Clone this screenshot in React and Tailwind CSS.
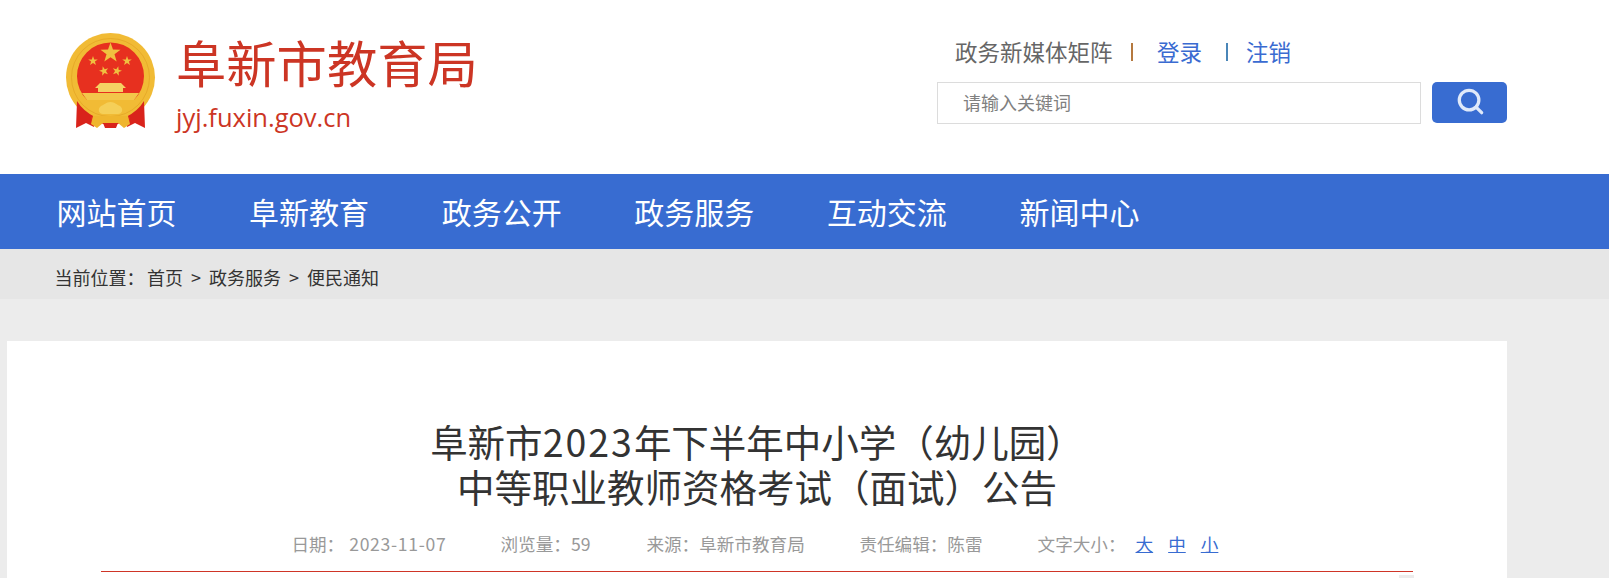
const fontStack = { fontFamily: '"Noto Sans CJK SC", "Noto Sans", sans-serif' };

const navItems = ["网站首页", "阜新教育", "政务公开", "政务服务", "互动交流", "新闻中心"];

function Star({ x, y, r, rotate = 0 }) {
  const pts = [];
  for (let i = 0; i < 10; i++) {
    const rad = i % 2 === 0 ? r : r * 0.4;
    const a = (Math.PI / 5) * i - Math.PI / 2;
    pts.push(`${(rad * Math.cos(a)).toFixed(2)},${(rad * Math.sin(a)).toFixed(2)}`);
  }
  return (
    <polygon
      points={pts.join(" ")}
      fill="#f0c040"
      transform={`translate(${x} ${y}) rotate(${rotate})`}
    />
  );
}

function Emblem() {
  return (
    <svg width="92" height="98" viewBox="0 0 92 98" className="shrink-0">
      {/* gold ring and red field, cut off flat under the gate */}
      <circle cx="45.5" cy="46.500" r="44.500" fill="#f1bb35" />
      <circle cx="45.5" cy="46.500" r="39" fill="none" stroke="#e09f20" strokeWidth="1" opacity="0.6" />
      <path d="M22.100 69 A33.500 33.500 0 1 1 68.900 69 Z" fill="#e7301f" />
      <Star x={45.5} y={22} r={10.500} />
      <Star x={28} y={30} r={5} />
      <Star x={62} y={30} r={5} />
      <Star x={39} y={40} r={5} rotate={-15} />
      <Star x={52} y={40} r={5} rotate={15} />
      {/* gate */}
      <path d="M35 52 L56 52 L61 57 L58 57 L58 61 L33 61 L33 57 L30 57 Z" fill="#f5d263" />
      <path d="M17 62 L74 62 L69 69 L22 69 Z" fill="#f3c64a" />
      {/* drapes */}
      <path d="M12 70 Q18 80 30 86 L29 96 L21 92 L11 97 Z" fill="#d9231b" />
      <path d="M79 70 Q73 80 61 86 L62 96 L70 92 L80 97 Z" fill="#d9231b" />
      <path d="M26 86 L38 93 L53 93 L65 86 L64 91 L27 91 Z" fill="#e7301f" />
      {/* flower and lower ornament */}
      <path d="M45.5 71 C41 71 39 74 36 75 C32 78 34 83 38 83 L53 83 C57 83 59 78 55 75 C52 74 50 71 45.5 71 Z" fill="#f5cf58" />
      <path d="M28 85 L63 85 L65 93 L59 97 L53 92 L38 92 L32 97 L26 93 Z" fill="#efb52e" />
      <path d="M38 92 L53 92 L51 97 L40 97 Z" fill="#d9231b" />
    </svg>
  );
}

export default function App() {
  return (
    <div className="h-[578px] w-full overflow-hidden bg-[#ececec] text-[#333]" style={fontStack}>
      <header className="bg-white">
        <div className="ml-[7px] flex h-[174px] w-[1500px] items-start">
          <div className="ml-[58px] mt-[31px] flex items-start">
            <Emblem />
            <div className="ml-[19px]">
              <div className="-mt-[1px] text-[50.300px] leading-[62px] text-[#cc3524]">阜新市教育局</div>
              <div className="mt-[7px] text-[25.500px] leading-[36px] text-[#cc3524]" style={{ fontFamily: '"Open Sans", sans-serif' }}>
                jyj.fuxin.gov.cn
              </div>
            </div>
          </div>
          <div className="ml-auto mt-[34px] w-[570px]">
            <div className="ml-[18px] flex h-[36px] items-center text-[22.500px]">
              <span className="text-[#666]">政务新媒体矩阵</span>
              <span className="ml-[18px] h-[18px] w-[2px] bg-[#b5793f]" />
              <a className="ml-[24.500px] text-[#3a6bd1]">登录</a>
              <span className="ml-[24px] h-[18px] w-[2px] bg-[#4a86b8]" />
              <a className="ml-[18px] text-[#3a6bd1]">注销</a>
            </div>
            <div className="mt-[12px] flex h-[42px] items-start">
              <div className="flex h-[42px] w-[484px] items-center border border-[#dcdcdc] bg-white pb-[2px] pl-[25px] text-[18px] text-[#808080]">
                请输入关键词
              </div>
              <button className="ml-[11px] flex h-[41px] w-[75px] items-center justify-center rounded-[5px] bg-[#386cd1] pb-[4px]">
                <svg width="28" height="28" viewBox="0 0 30 30" fill="none" stroke="#dfe9fa" strokeWidth="3.500">
                  <circle cx="14" cy="14" r="10.500" />
                  <path d="M21.500 21.500 L27.500 27.500" strokeLinecap="round" />
                </svg>
              </button>
            </div>
          </div>
        </div>
      </header>

      <nav className="h-[75px] bg-[#386cd1]">
        <div className="ml-[56.500px] flex h-full items-center gap-[72.600px] pb-[1px] text-[30px] text-white">
          {navItems.map((item) => (
            <a key={item} className="w-[120px] whitespace-nowrap">
              {item}
            </a>
          ))}
        </div>
      </nav>

      <div className="flex h-[50px] items-center bg-[#e6e6e6] pl-[54.500px] pt-[6px] text-[18px] text-[#333]">
        <span>当前位置：</span>
        <span className="ml-[2.500px]">首页</span>
        <span className="mx-[8px]">&gt;</span>
        <span>政务服务</span>
        <span className="mx-[8px]">&gt;</span>
        <span>便民通知</span>
      </div>

      <main className="ml-[7px] mt-[42px] h-[237px] w-[1500px] bg-white pt-[77px]">
        <h1 className="text-center text-[37.500px] font-normal leading-[45px] text-[#333]">
          阜新市<span className="tracking-[2px]">2023</span>年下半年中小学（幼儿园）
          <br />
          中等职业教师资格考试（面试）公告
        </h1>
        <div className="mx-[94px] mt-[20px] flex h-[44px] items-center border-b border-[#cf3527] pb-[10px] pl-[190.400px] text-[17.600px] text-[#999]">
          <span>日期：</span>
          <span className="ml-[5px] tracking-[0.7px]">2023-11-07</span>
          <span className="ml-[54px]">浏览量：59</span>
          <span className="ml-[56px]">来源：阜新市教育局</span>
          <span className="ml-[54.600px]">责任编辑：陈雷</span>
          <span className="ml-[55px]">文字大小：</span>
          <a className="ml-[10px] text-[#386cd1] underline">大</a>
          <a className="ml-[15px] text-[#386cd1] underline">中</a>
          <a className="ml-[15px] text-[#386cd1] underline">小</a>
        </div>
        <div className="ml-[1392px] mt-[3px] h-[3px] w-[15px] bg-[#ececec]" />
      </main>
    </div>
  );
}
